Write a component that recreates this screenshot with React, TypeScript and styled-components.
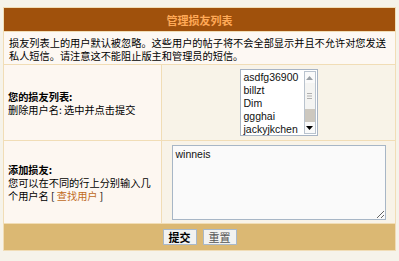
import styled, { createGlobalStyle } from "styled-components";

const GlobalStyle = createGlobalStyle`
  html, body {
    margin: 0;
    padding: 0;
    background: #f6f3ea;
  }
  body {
    font-family: "Liberation Sans", "Noto Sans CJK SC", sans-serif;
    font-size: 10px;
    color: #000;
  }
`;

const Page = styled.div`
  padding: 7px 3px 10px 3px;
`;

const Panel = styled.form`
  display: grid;
  grid-template-columns: 157px 1fr;
  gap: 1px;
  background: #f1ddb6;
  border: 1px solid #f1ddb6;
`;

const Header = styled.div`
  grid-column: 1 / -1;
  height: 23px;
  background: #a0510c;
  color: #ffa957;
  font-weight: bold;
  font-size: 11px;
  font-family: "Noto Sans CJK SC", sans-serif;
  display: flex;
  align-items: center;
  justify-content: center;
`;

const Notice = styled.div`
  grid-column: 1 / -1;
  background: #fdf8f3;
  padding: 4px 5px 3px 5px;
  line-height: 13px;
  font-family: "Noto Sans CJK SC", sans-serif;
  font-size: 10.2px;
  height: 25px;
`;

const LabelCell = styled.div<{ $h: number }>`
  background: #fdf7f1;
  height: ${(p) => p.$h}px;
  display: flex;
  flex-direction: column;
  justify-content: center;
  padding: 0 4px;
  line-height: 13px;
  font-family: "Noto Sans CJK SC", sans-serif;
  font-size: 10.2px;
`;

const FieldCell = styled.div<{ $top: number }>`
  background: #f8f3e8;
  display: flex;
  justify-content: center;
  align-items: flex-start;
  padding-top: ${(p) => p.$top}px;
`;

const Title = styled.b`
  font-weight: bold;
`;

const Hint = styled.span`
  display: block;
`;

const Link = styled.a`
  color: #c06a1c;
  text-decoration: none;
`;

const ListBox = styled.div`
  width: 76px;
  height: 65px;
  border: 1px solid #a8b4c4;
  background: #fff;
  display: flex;
  box-sizing: content-box;
`;

const Items = styled.div`
  flex: 1;
  padding: 1px 0 0 3px;
  overflow: hidden;
`;

const Item = styled.div`
  height: 13px;
  line-height: 13px;
  font-size: 10.5px;
  font-family: "Liberation Sans", sans-serif;
  color: #111;
  white-space: nowrap;
`;

const Scrollbar = styled.div`
  width: 12px;
  margin: 1px 1px 1px 0;
  border: 1px solid #b9c3ce;
  background: #eeeeea;
  display: flex;
  flex-direction: column;
  justify-content: space-between;
  box-sizing: border-box;
`;

const ArrowBtn = styled.div`
  height: 11px;
  display: flex;
  align-items: center;
  justify-content: center;
  background: #fafafa;
`;

const Thumb = styled.div`
  flex: 1;
  display: flex;
  flex-direction: column;
`;

const ThumbTrack = styled.div`
  flex: 1;
  background: #f4f4f2;
  display: flex;
  align-items: center;
  justify-content: center;
`;

const ThumbLow = styled.div`
  height: 13px;
  background: #cdc8bf;
`;

const NameArea = styled.textarea`
  width: 214px;
  height: 75px;
  box-sizing: border-box;
  border: 1px solid #a7b6c6;
  background: #fafafa;
  font-family: "Liberation Sans", sans-serif;
  font-size: 10.5px;
  line-height: 13px;
  padding: 2px 3px;
  margin: 0;
  color: #111;
  outline: none;
`;

const Footer = styled.div`
  grid-column: 1 / -1;
  height: 26px;
  background: #dbb873;
  display: flex;
  align-items: center;
  justify-content: center;
  gap: 6px;
`;

const Button = styled.button<{ $strong?: boolean }>`
  height: 16px;
  padding: 0 5px;
  border: 1px solid #a9b8c8;
  background: #f2f2f0;
  font-family: "Noto Sans CJK SC", sans-serif;
  font-size: 11px;
  line-height: 14px;
  font-weight: ${(p) => (p.$strong ? "bold" : "normal")};
  color: ${(p) => (p.$strong ? "#000" : "#555")};
  margin: 0;
`;

const friends = ["asdfg36900", "billzt", "Dim", "ggghai", "jackyjkchen"];

export default function App() {
  return (
    <Page>
      <GlobalStyle />
      <Panel onSubmit={(e) => e.preventDefault()}>
        <Header>管理损友列表</Header>
        <Notice>
          损友列表上的用户默认被忽略。这些用户的帖子将不会全部显示并且不允许对您发送私人短信。请注意这不能阻止版主和管理员的短信。
        </Notice>

        <LabelCell $h={75}>
          <Title>您的损友列表:</Title>
          <Hint>删除用户名: 选中并点击提交</Hint>
        </LabelCell>
        <FieldCell $top={4}>
          <ListBox>
            <Items>
              {friends.map((f) => (
                <Item key={f}>{f}</Item>
              ))}
            </Items>
            <Scrollbar>
              <ArrowBtn>
                <svg width="7" height="4" viewBox="0 0 7 4">
                  <path d="M0 4 L3.5 0 L7 4 Z" fill="#9aa0a6" />
                </svg>
              </ArrowBtn>
              <Thumb>
                <ThumbTrack>
                  <svg width="5" height="6" viewBox="0 0 5 6">
                    <path d="M0 0.5 H5 M0 3 H5 M0 5.5 H5" stroke="#b0b0b0" strokeWidth="1" />
                  </svg>
                </ThumbTrack>
                <ThumbLow />
              </Thumb>
              <ArrowBtn>
                <svg width="7" height="4" viewBox="0 0 7 4">
                  <path d="M0 0 L7 0 L3.5 4 Z" fill="#000" />
                </svg>
              </ArrowBtn>
            </Scrollbar>
          </ListBox>
        </FieldCell>

        <LabelCell $h={82}>
          <Title>添加损友:</Title>
          <Hint>
            您可以在不同的行上分别输入几个用户名 [ <Link href="#">查找用户</Link> ]
          </Hint>
        </LabelCell>
        <FieldCell $top={4}>
          <NameArea defaultValue="winneis" />
        </FieldCell>

        <Footer>
          <Button type="submit" $strong>提交</Button>
          <Button type="reset">重置</Button>
        </Footer>
      </Panel>
    </Page>
  );
}
